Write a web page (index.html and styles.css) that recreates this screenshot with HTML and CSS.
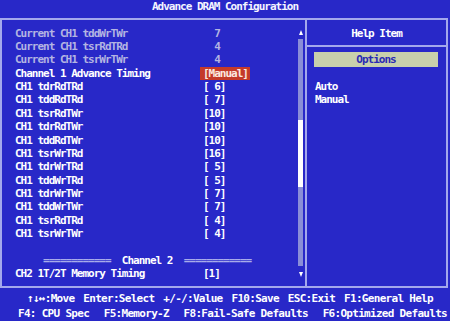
FILE: index.html
```html
<!DOCTYPE html>
<html>
<head>
<meta charset="utf-8">
<title>Advance DRAM Configuration</title>
<link rel="stylesheet" href="styles.css">
</head>
<body>
<div class="title">Advance DRAM Configuration</div>
<div class="frame">
  <div class="main">
    <div class="items">
      <div class="row dim"><span class="lbl">Current CH1 tddWrTWr</span><span class="val">  7</span></div>
      <div class="row dim"><span class="lbl">Current CH1 tsrRdTRd</span><span class="val">  4</span></div>
      <div class="row dim"><span class="lbl">Current CH1 tsrWrTWr</span><span class="val">  4</span></div>
      <div class="row"><span class="lbl">Channel 1 Advance Timing</span><span class="val sel">[Manual]</span></div>
      <div class="row"><span class="lbl">CH1 tdrRdTRd</span><span class="val">[ 6]</span></div>
      <div class="row"><span class="lbl">CH1 tddRdTRd</span><span class="val">[ 7]</span></div>
      <div class="row"><span class="lbl">CH1 tsrRdTWr</span><span class="val">[10]</span></div>
      <div class="row"><span class="lbl">CH1 tdrRdTWr</span><span class="val">[10]</span></div>
      <div class="row"><span class="lbl">CH1 tddRdTWr</span><span class="val">[10]</span></div>
      <div class="row"><span class="lbl">CH1 tsrWrTRd</span><span class="val">[16]</span></div>
      <div class="row"><span class="lbl">CH1 tdrWrTRd</span><span class="val">[ 5]</span></div>
      <div class="row"><span class="lbl">CH1 tddWrTRd</span><span class="val">[ 5]</span></div>
      <div class="row"><span class="lbl">CH1 tdrWrTWr</span><span class="val">[ 7]</span></div>
      <div class="row"><span class="lbl">CH1 tddWrTWr</span><span class="val">[ 7]</span></div>
      <div class="row"><span class="lbl">CH1 tsrRdTRd</span><span class="val">[ 4]</span></div>
      <div class="row"><span class="lbl">CH1 tsrWrTWr</span><span class="val">[ 4]</span></div>
      <div class="row"></div>
      <div class="row sep"><span class="eq">     ============</span>  Channel 2  <span class="eq">============</span></div>
      <div class="row"><span class="lbl">CH2 1T/2T Memory Timing</span><span class="val">[1]</span></div>
    </div>
    <div class="scroll">
      <div class="arrow up"></div>
      <div class="track"><div class="thumb"></div></div>
      <div class="arrow down"></div>
    </div>
  </div>
  <div class="help">
    <div class="help-title">Help Item</div>
    <div class="options">Options</div>
    <div class="help-text">
      <div>Auto</div>
      <div>Manual</div>
    </div>
  </div>
</div>
<div class="footer">
  <div class="keys k1"><span>↑↓↔:Move</span><span>Enter:Select</span><span>+/-/:Value</span><span>F10:Save</span><span>ESC:Exit</span><span>F1:General Help</span></div>
  <div class="keys k2"><span>F4: CPU Spec</span><span>F5:Memory-Z</span><span>F8:Fail-Safe Defaults</span><span>F6:Optimized Defaults</span></div>
</div>
</body>
</html>
```

FILE: styles.css
```css
html, body {
  margin: 0;
  padding: 0;
}

body {
  width: 450px;
  height: 321px;
  overflow: hidden;
  background: #2828c8;
  color: #ffffff;
  font-family: "DejaVu Sans Mono", "Liberation Mono", monospace;
  font-weight: bold;
  font-size: 11px;
  line-height: 13.375px;
  letter-spacing: -1px;
}

.title {
  height: 18px;
  line-height: 14px;
  text-align: center;
  color: #f4f4ff;
}

.frame {
  display: flex;
  box-sizing: border-box;
  width: 448px;
  height: 270px;
  border: 2px solid #a4a8ec;
}

.main {
  display: flex;
  width: 303px;
  border-right: 2px solid #a4a8ec;
}

.items {
  flex: 1;
  padding: 6.6px 0 0 13px;
}

.row {
  display: flex;
  height: 13.375px;
  white-space: pre;
}

.lbl {
  flex: 0 0 188px;
}

.val {
  white-space: pre;
}

.dim {
  color: #b4b4e2;
}

.sel {
  margin-left: -3px;
  padding: 0 2px 0 3px;
  background: #c43a2a;
  color: #fbe8e0;
}

.eq {
  color: #a8acea;
}

.scroll {
  display: flex;
  flex-direction: column;
  align-items: center;
  width: 5px;
  margin-right: 2px;
  padding: 10px 0 9px;
}

.arrow {
  width: 0;
  height: 0;
  border-left: 2.5px solid transparent;
  border-right: 2.5px solid transparent;
}

.arrow.up {
  border-bottom: 5px solid #ffffff;
}

.arrow.down {
  border-top: 5px solid #ffffff;
}

.track {
  flex: 1;
  width: 5px;
  margin: 4px 0 6px;
  background: #8a8ed8;
}

.thumb {
  margin-top: 81px;
  height: 67px;
  background: #ffffff;
}

.help {
  flex: 1;
}

.help-title {
  padding: 6.5px 0 5px;
  text-align: center;
  border-bottom: 2px solid #a4a8ec;
}

.options {
  margin: 5px 8px 0 7px;
  height: 15px;
  line-height: 15px;
  text-align: center;
  background: #c8d0ac;
  color: #2a2ab4;
}

.help-text {
  padding: 13px 0 0 8px;
}

.footer {
  padding-top: 2.5px;
  line-height: 15px;
  letter-spacing: -0.7px;
}

.keys {
  display: flex;
  justify-content: space-between;
  white-space: pre;
}

.k1 {
  padding: 0 17px 0 27px;
}

.k2 {
  padding: 0 3px 0 18px;
}
```
